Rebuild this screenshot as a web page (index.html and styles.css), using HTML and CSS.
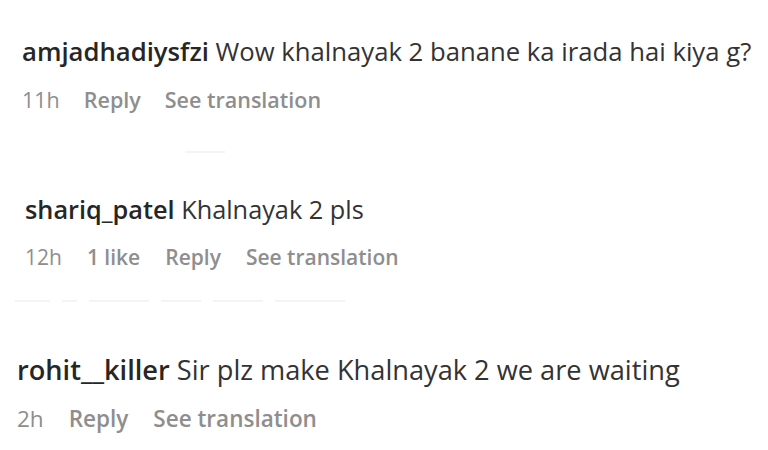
FILE: index.html
```html
<!DOCTYPE html>
<html lang="en">
<head>
<meta charset="utf-8">
<title>Comments</title>
<link rel="stylesheet" href="styles.css">
</head>
<body>
<main class="comments">
  <section class="comment c1">
    <p class="body"><span class="user">amjadhadiysfzi</span> Wow khalnayak 2 banane ka irada hai kiya g?</p>
    <div class="meta"><span class="time">11h</span><span class="act">Reply</span><span class="act">See translation</span></div>
  </section>
  <div class="ghost g1"><i class="w40"></i></div>
  <section class="comment c2">
    <p class="body"><span class="user">shariq_patel</span> Khalnayak 2 pls</p>
    <div class="meta"><span class="time">12h</span><span class="act">1 like</span><span class="act">Reply</span><span class="act">See translation</span></div>
  </section>
  <div class="ghost g2"><i class="w35"></i><i class="w15"></i><i class="w60"></i><i class="w40"></i><i class="w50"></i><i class="w70"></i></div>
  <section class="comment c3">
    <p class="body"><span class="user">rohit__killer</span> Sir plz make Khalnayak 2 we are waiting</p>
    <div class="meta"><span class="time">2h</span><span class="act">Reply</span><span class="act">See translation</span></div>
  </section>
</main>
</body>
</html>
```
FILE: styles.css
```css
* { box-sizing: border-box; }
html, body { margin: 0; padding: 0; background: #ffffff; }
body {
  width: 768px;
  height: 450px;
  overflow: hidden;
  font-family: "Open Sans", "Noto Sans", "Liberation Sans", sans-serif;
  color: #262626;
}
.comments { display: flex; flex-direction: column; }
.comment { display: flex; flex-direction: column; }
.body { margin: 0; white-space: nowrap; height: 32px; line-height: 32px; color: #333333; }
.user { font-weight: 600; color: #262626; }
.meta { display: flex; gap: 24px; color: #8e8e8e; height: 28px; line-height: 28px; white-space: nowrap; }
.meta .act { font-weight: 600; }
.time { font-weight: 400; }

.c1 { padding: 36px 0 0 22px; }
.c1 .body { font-size: 25.7px; }
.c1 .meta { margin-top: 18px; font-size: 21.5px; }

.c2 { padding: 0 0 0 25px; }
.c2 .body { font-size: 25.3px; }
.c2 .meta { margin-top: 18px; font-size: 21px; gap: 25px; }

.c3 { padding: 0 0 0 17px; }
.c3 .body { font-size: 27.2px; height: 34px; line-height: 34px; }
.c3 .meta { margin-top: 17px; font-size: 22.5px; gap: 25px; height: 30px; line-height: 30px; }

.ghost { display: flex; gap: 12px; align-items: flex-start; }
.ghost i { display: block; height: 2px; background: #f4f4f4; }
.g1 { padding: 37px 0 0 185px; height: 79px; }
.g2 { padding: 29px 0 0 15px; height: 82px; }
.w15 { width: 15px; }
.w35 { width: 35px; }
.w40 { width: 40px; }
.w50 { width: 50px; }
.w60 { width: 60px; }
.w70 { width: 70px; }
```
